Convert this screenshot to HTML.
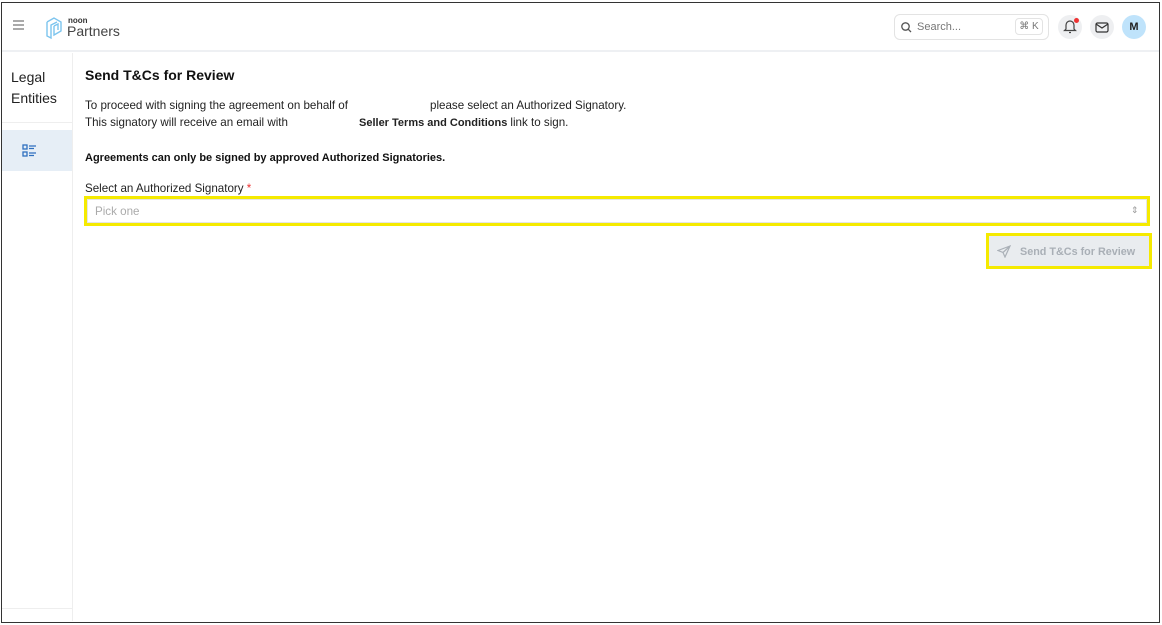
<!DOCTYPE html>
<html><head><style>
*{box-sizing:border-box;margin:0;padding:0}
body{width:1162px;height:625px;background:#fff;font-family:"Liberation Sans",sans-serif;position:relative;overflow:hidden}
.frame{position:absolute;left:1px;top:2px;width:1159px;height:621px;border:1.5px solid #333;}
.hdr{position:absolute;left:2px;top:3px;width:1157px;height:49px;border-bottom:2px solid #eef0f3}
.side{position:absolute;left:2px;top:53px;width:71px;height:568px;border-right:1px solid #eee}
.t{position:absolute;font-size:11px;color:#222;white-space:nowrap}
.r{font-size:11.6px}
</style></head><body>
<div class="frame"></div>
<div class="hdr">
  <div style="position:absolute;left:11px;top:21px;width:11px;height:1.5px;background:#aaa;box-shadow:0 -4px 0 #aaa,0 4px 0 #aaa"></div>
  <svg style="position:absolute;left:43px;top:13px" width="18" height="24" viewBox="0 0 18 24" fill="none" stroke="#7cc4ee" stroke-width="1.4"><path d="M2 6 L9 2 L16 6 L16 15 L9 19 L9 10 M2 6 L2 20 L6 22 L6 9 L12 6 M9 10 L13 8 L13 14"/></svg>
  <div style="position:absolute;left:66px;top:13px;font-size:8px;font-weight:bold;color:#333">noon</div>
  <div style="position:absolute;left:65px;top:20px;font-size:14px;color:#444">Partners</div>
  <div style="position:absolute;left:892px;top:11px;width:155px;height:26px;border:1px solid #e3e3e3;border-radius:6px"></div>
  <svg style="position:absolute;left:899px;top:19px" width="11" height="11" viewBox="0 0 11 11" fill="none" stroke="#555" stroke-width="1.3"><circle cx="4.5" cy="4.5" r="3.7"/><path d="M7.3 7.3L10 10"/></svg>
  <div class="t" style="left:915px;top:18px;color:#777">Search...</div>
  <div style="position:absolute;left:1013px;top:15px;width:28px;height:17px;border:1px solid #e3e3e3;border-radius:4px;font-size:10px;color:#777;text-align:center;line-height:16px">⌘ K</div>
  <div style="position:absolute;left:1056px;top:12px;width:24px;height:24px;border-radius:50%;background:#eeeff1"></div>
  <svg style="position:absolute;left:1061px;top:16px" width="14" height="15" viewBox="0 0 14 15" fill="none" stroke="#444" stroke-width="1.2"><path d="M3 10V6a4 4 0 0 1 8 0v4l1.5 1.5h-11z M6 13.5h2"/></svg>
  <div style="position:absolute;left:1072px;top:15px;width:5px;height:5px;border-radius:50%;background:#e33"></div>
  <div style="position:absolute;left:1088px;top:12px;width:24px;height:24px;border-radius:50%;background:#eeeff1"></div>
  <svg style="position:absolute;left:1093px;top:19px" width="14" height="11" viewBox="0 0 14 11" fill="none" stroke="#333" stroke-width="1.2"><rect x="1" y="1" width="12" height="9" rx="1.5"/><path d="M1 2l6 4 6-4"/></svg>
  <div style="position:absolute;left:1120px;top:12px;width:24px;height:24px;border-radius:50%;background:#bfe3fb;font-size:11px;font-weight:bold;color:#222;text-align:center;line-height:24px">M</div>
</div>
<div class="side">
  <div style="position:absolute;left:9px;top:14px;font-size:14px;color:#222;line-height:21px">Legal<br>Entities</div>
  <div style="position:absolute;left:0;top:69px;width:70px;height:1px;background:#eee"></div>
  <div style="position:absolute;left:0;top:77px;width:70px;height:41px;background:#e6eef6"></div>
  <svg style="position:absolute;left:20px;top:91px" width="15" height="13" viewBox="0 0 15 13" fill="none" stroke="#2f6fbf" stroke-width="1.3"><rect x="1" y="1" width="4" height="4"/><rect x="1" y="8" width="4" height="4"/><path d="M7 2h7M7 4.5h5M7 9h7M7 11.5h5"/></svg>
  <div style="position:absolute;left:0;top:555px;width:70px;height:1px;background:#eee"></div>
</div>
<div class="t" style="left:85px;top:67px;font-size:14px;font-weight:bold;color:#111">Send T&amp;Cs for Review</div>
<div class="t r" style="left:85px;top:99px">To proceed with signing the agreement on behalf of</div>
<div class="t r" style="left:430px;top:99px">please select an Authorized Signatory.</div>
<div class="t r" style="left:85px;top:116px">This signatory will receive an email with</div>
<div class="t" style="left:359px;top:116px"><b>Seller Terms and Conditions</b> <span class="r">link to sign.</span></div>
<div class="t" style="left:85px;top:152px;font-weight:bold;color:#111">Agreements can only be signed by approved Authorized Signatories.</div>
<div class="t r" style="left:85px;top:182px">Select an Authorized Signatory <span style="color:#e33">*</span></div>
<div style="position:absolute;left:84px;top:196px;width:1066px;height:30px;border:3px solid #f5ea00"></div>
<div style="position:absolute;left:87px;top:199px;width:1060px;height:24px;border:1px solid #e5e5e5"></div>
<div class="t r" style="left:95px;top:205px;color:#aaa">Pick one</div>
<div class="t" style="left:1131px;top:205px;color:#999;font-size:9px">⇕</div>
<div style="position:absolute;left:986px;top:233px;width:166px;height:36px;border:3px solid #f5ea00;background:#fff"></div>
<div style="position:absolute;left:989px;top:236px;width:160px;height:30px;background:#e9ecef"></div>
<svg style="position:absolute;left:997px;top:245px" width="14" height="13" viewBox="0 0 14 13" fill="none" stroke="#aab0b7" stroke-width="1.2"><path d="M13 1L1 5.5l5 2 2 4.5z M6 7.5L13 1"/></svg>
<div class="t" style="left:1020px;top:246px;color:#a9afb6;font-weight:bold;font-size:10.8px">Send T&amp;Cs for Review</div>
</body></html>
